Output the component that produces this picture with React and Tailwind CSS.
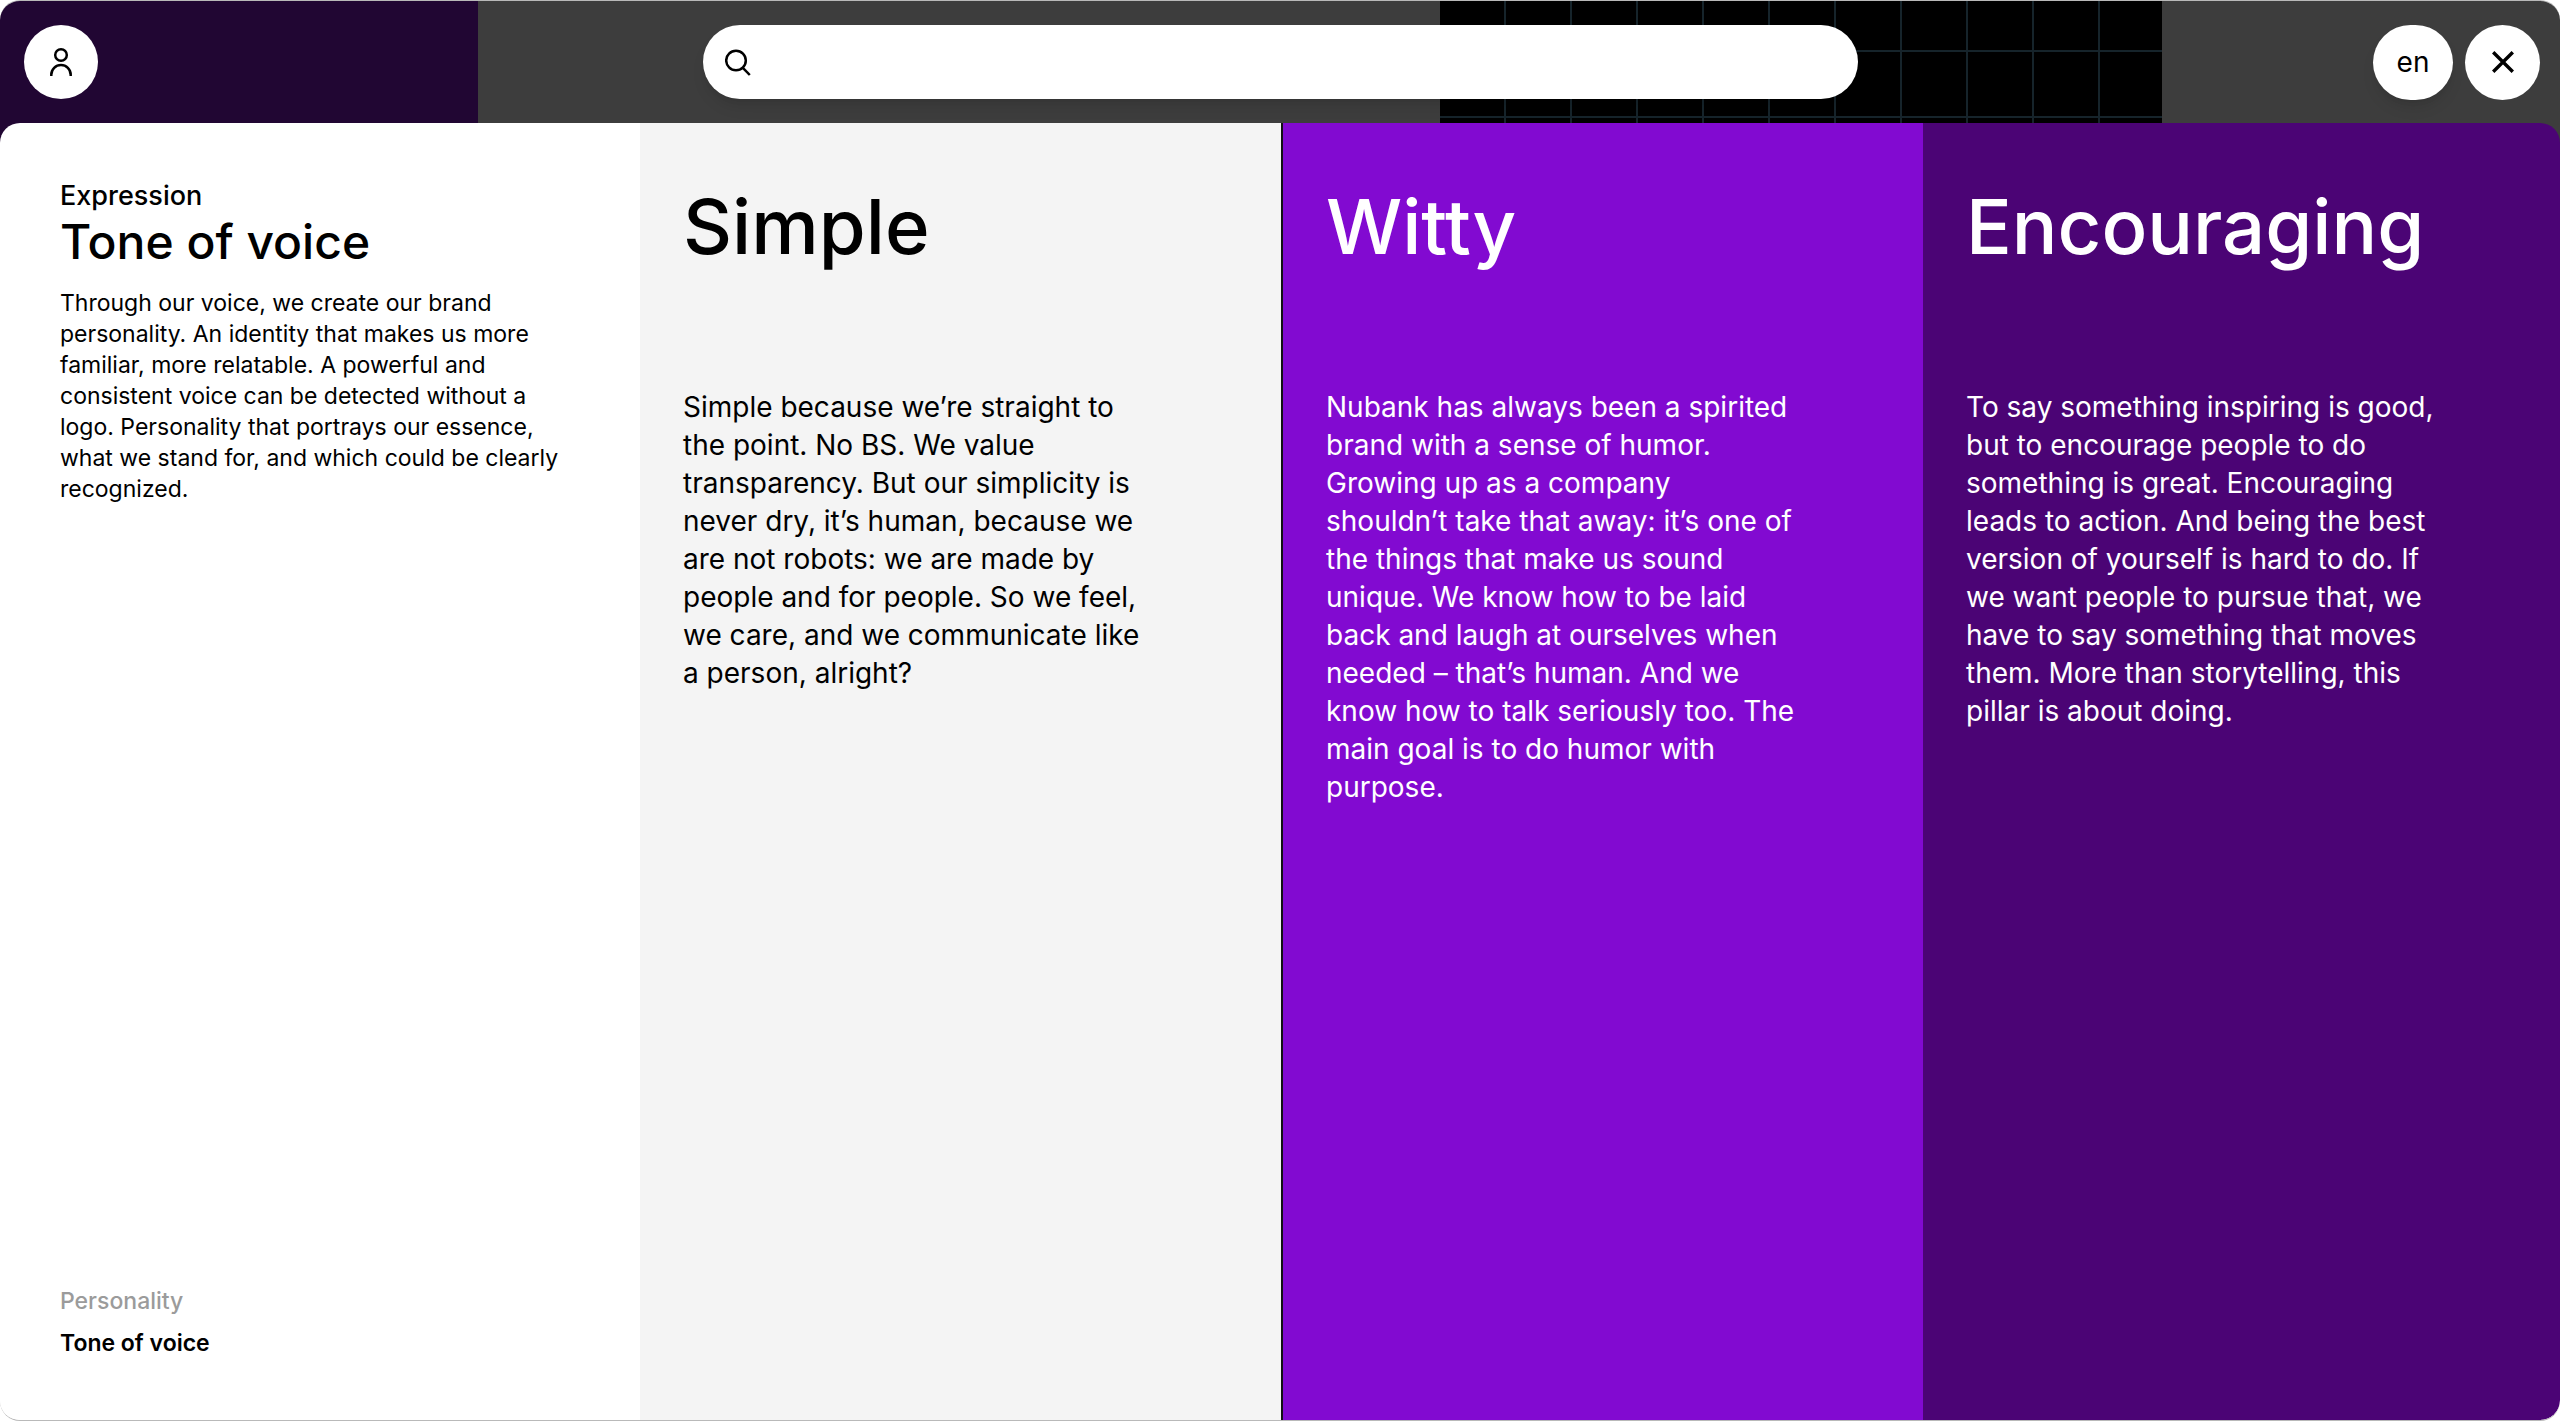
const introLines = [
  "Through our voice, we create our brand",
  "personality. An identity that makes us more",
  "familiar, more relatable. A powerful and",
  "consistent voice can be detected without a",
  "logo. Personality that portrays our essence,",
  "what we stand for, and which could be clearly",
  "recognized.",
];

const pillars = [
  {
    title: "Simple",
    className: "bg-[#f4f4f4] text-black border-r-2 border-[#111111]",
    lines: [
      "Simple because we’re straight to",
      "the point. No BS. We value",
      "transparency. But our simplicity is",
      "never dry, it’s human, because we",
      "are not robots: we are made by",
      "people and for people. So we feel,",
      "we care, and we communicate like",
      "a person, alright?",
    ],
  },
  {
    title: "Witty",
    className: "bg-[#820ad1] text-white",
    lines: [
      "Nubank has always been a spirited",
      "brand with a sense of humor.",
      "Growing up as a company",
      "shouldn’t take that away: it’s one of",
      "the things that make us sound",
      "unique. We know how to be laid",
      "back and laugh at ourselves when",
      "needed – that’s human. And we",
      "know how to talk seriously too. The",
      "main goal is to do humor with",
      "purpose.",
    ],
  },
  {
    title: "Encouraging",
    className: "bg-[#4b0475] text-white",
    lines: [
      "To say something inspiring is good,",
      "but to encourage people to do",
      "something is great. Encouraging",
      "leads to action. And being the best",
      "version of yourself is hard to do. If",
      "we want people to pursue that, we",
      "have to say something that moves",
      "them. More than storytelling, this",
      "pillar is about doing.",
    ],
  },
];

function UserIcon() {
  return (
    <svg width="24" height="30" viewBox="0 0 24 30" fill="none" stroke="black" strokeWidth="2.5" aria-hidden="true">
      <circle cx="12" cy="8" r="5.8" />
      <path d="M2.3 29v-1.2a9.7 9.7 0 0 1 19.4 0V29" />
    </svg>
  );
}

function SearchIcon() {
  return (
    <svg width="26" height="27" viewBox="0 0 26 27" fill="none" stroke="black" strokeWidth="2.5" aria-hidden="true">
      <circle cx="11" cy="11.5" r="9.8" />
      <path d="M17.6 18.6l7.2 7.4" />
    </svg>
  );
}

function CloseIcon() {
  return (
    <svg width="22" height="22" viewBox="0 0 22 22" fill="none" stroke="black" strokeWidth="3.4" aria-hidden="true">
      <path d="M1.2 1.2l19.6 19.6M20.8 1.2L1.2 20.8" />
    </svg>
  );
}

function Backdrop() {
  return (
    <div className="absolute inset-0 grid grid-cols-[478fr_962fr_722fr_398fr]" aria-hidden="true">
      <div className="bg-[#210633]" />
      <div className="bg-[#3d3d3d]" />
      <div className="bg-black bg-[linear-gradient(to_right,#16242b_2px,transparent_2px),linear-gradient(to_bottom,#16242b_2px,transparent_2px)] bg-[size:66px_66px] bg-[position:64px_49px]" />
      <div className="bg-[#3d3d3d]" />
    </div>
  );
}

function Header() {
  return (
    <header className="relative grid grid-cols-[1fr_1155px_1fr] items-center h-[122px] px-6">
      <button aria-label="Account" className="flex items-center justify-center size-[74px] rounded-full bg-white">
        <UserIcon />
      </button>
      <label className="flex items-center gap-4 h-[74px] px-[22px] rounded-full bg-white shadow-lg">
        <SearchIcon />
        <input type="search" aria-label="Search" className="flex-1 bg-transparent text-[28px] outline-none" />
      </label>
      <div className="flex justify-end gap-3 -mr-1">
        <button className="w-20 h-[75px] rounded-full bg-white text-[28px] text-black shadow-lg">en</button>
        <button aria-label="Close" className="flex items-center justify-center size-[75px] rounded-full bg-white">
          <CloseIcon />
        </button>
      </div>
    </header>
  );
}

function Intro() {
  return (
    <section className="flex flex-col bg-white px-[60px] pt-[55px] pb-[62px] text-black">
      <p className="text-[27px] leading-9 font-medium">Expression</p>
      <h1 className="text-[48px] leading-[56px] font-medium">Tone of voice</h1>
      <p className="mt-[18px] text-[23px] leading-[31px] whitespace-pre">{introLines.join("\n")}</p>
      <nav className="mt-auto flex flex-col gap-3 text-[23px] leading-[30px] font-medium">
        <a href="#personality" className="text-[#9b9b9b]">Personality</a>
        <a href="#tone-of-voice" aria-current="page" className="font-semibold text-black">Tone of voice</a>
      </nav>
    </section>
  );
}

function Pillar({ title, lines, className }) {
  return (
    <section className={`px-[43px] pt-[56px] ${className}`}>
      <h2 className="text-[76px] leading-[94px] font-medium">{title}</h2>
      <p className="mt-[115px] text-[28px] leading-[38px] whitespace-pre">{lines.join("\n")}</p>
    </section>
  );
}

export default function App() {
  return (
    <div className="min-h-screen bg-white font-['Inter',sans-serif]">
      <div className="relative flex flex-col min-h-screen overflow-hidden rounded-[20px] border-y border-[#8a8a8a]/60">
        <div className="absolute inset-x-0 top-0 h-[160px]">
          <Backdrop />
        </div>
        <Header />
        <main className="relative flex-1 grid grid-cols-[640fr_643fr_640fr_637fr] overflow-hidden rounded-[20px]">
          <Intro />
          {pillars.map((pillar) => (
            <Pillar key={pillar.title} {...pillar} />
          ))}
        </main>
      </div>
    </div>
  );
}
